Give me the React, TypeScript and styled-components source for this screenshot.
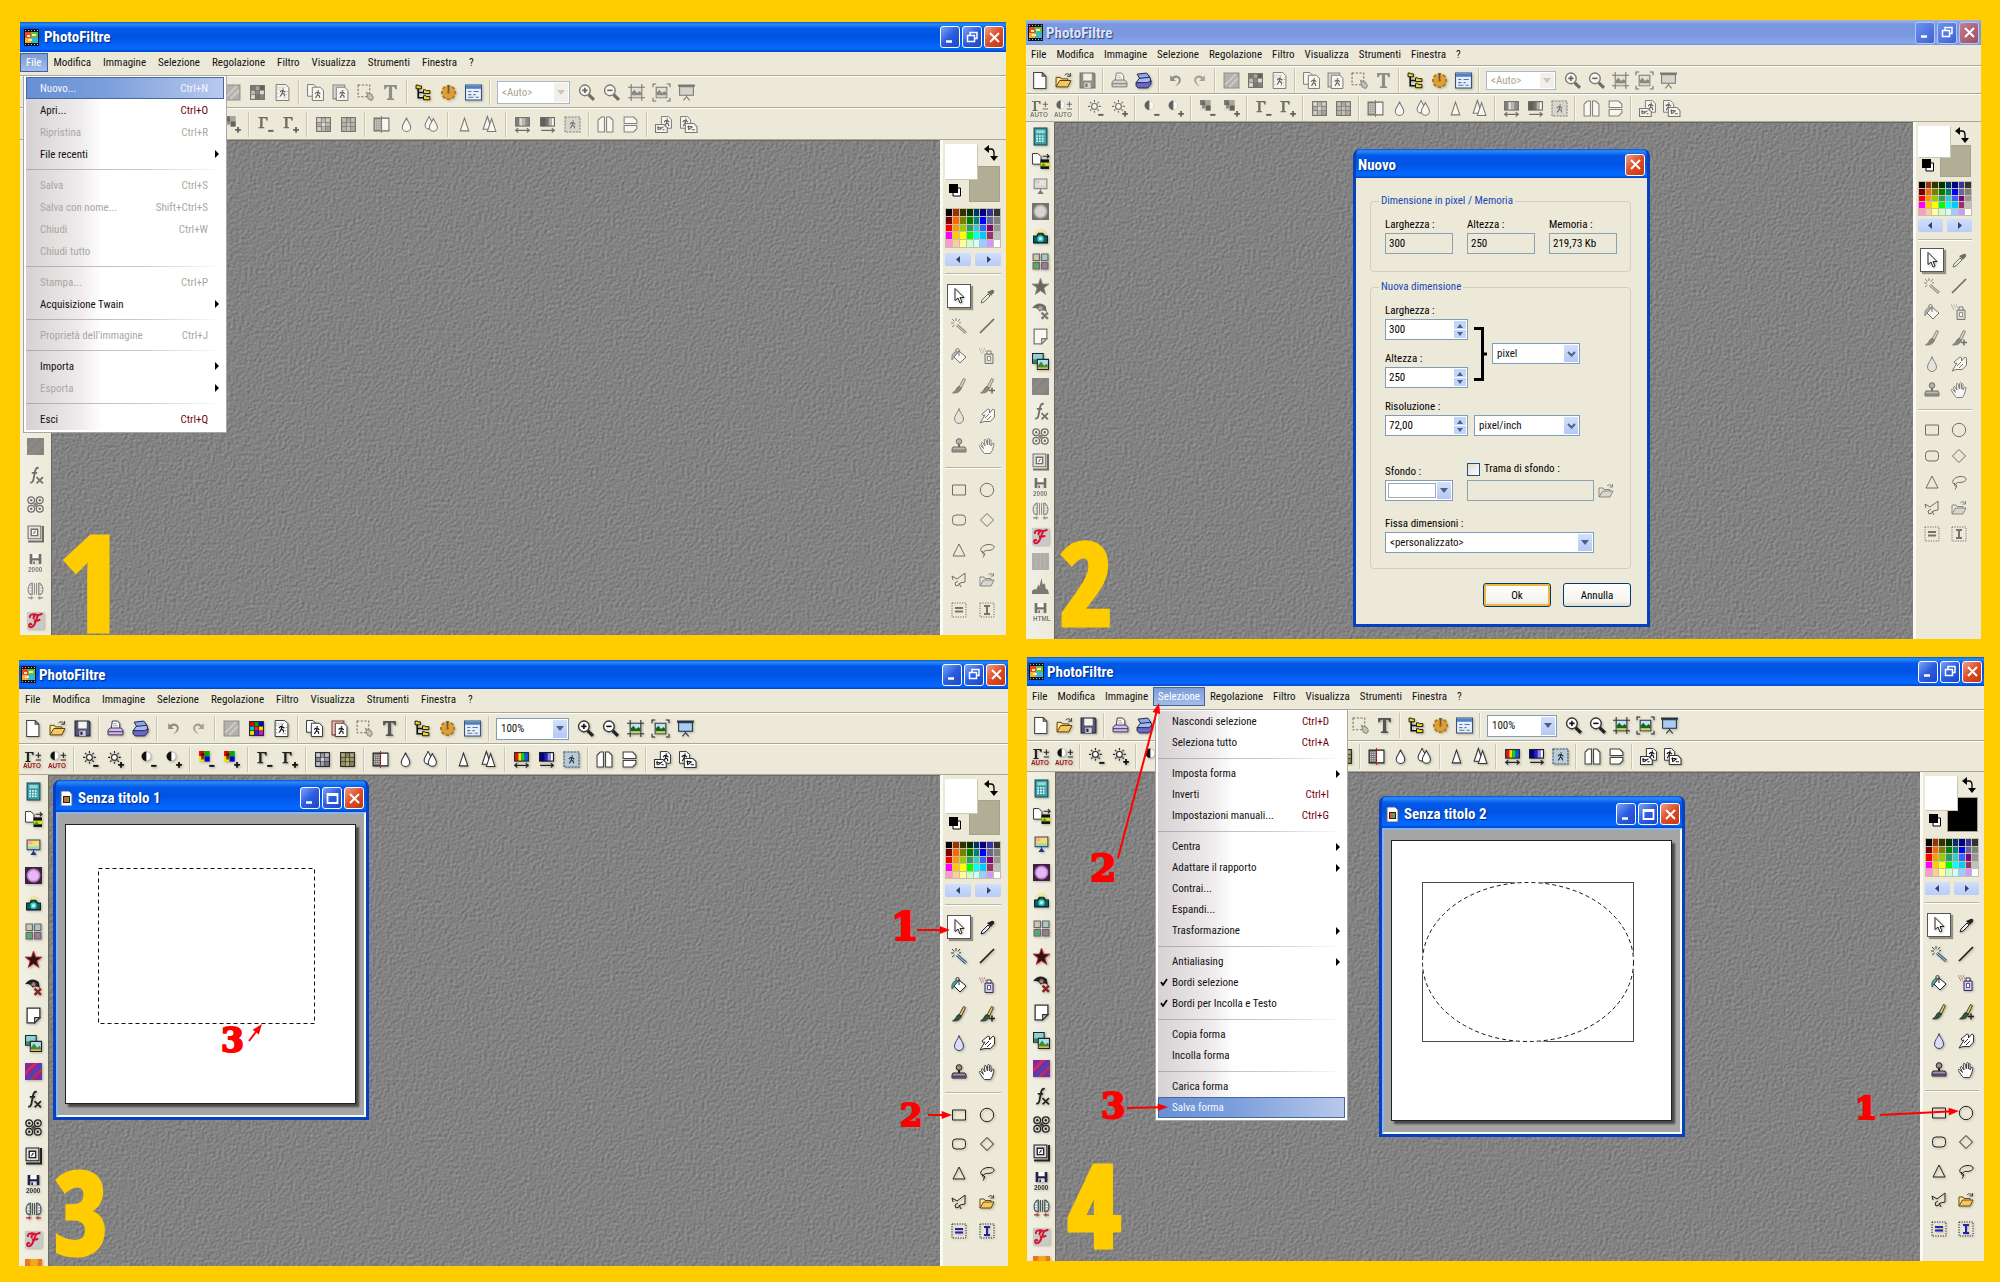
import React from 'react';
import styled, { createGlobalStyle, css } from 'styled-components';

/* ---------- shared values ---------- */

const face = '#ece9d8';
const line = '#aca899';
const yellow = '#ffcc00';
const uiFont = '"Roboto Condensed", "Liberation Sans Narrow", "Liberation Sans", sans-serif';

type Metrics = {
  title: number;
  titleGap: number;
  menu: number;
  menuPad: number;
  bar: number;
  button: number;
  leftWidth: number;
  leftPitch: number;
  rightWidth: number;
  contentWidth: number;
  swatch: number;
  palette: number;
  gap: number;
  tool: number;
};

const Global = createGlobalStyle`
  *, *::before, *::after { box-sizing: border-box; }
  body { margin: 0; background: ${yellow}; font-family: ${uiFont}; }
  button, input, select { font: inherit; color: inherit; }
`;

const Page = styled.main`
  display: grid;
  grid-template-columns: 988fr 958fr;
  grid-template-rows: 619fr 609fr;
  gap: 18px;
  padding: 20px 16px 16px 20px;
  height: 100vh;
  min-height: 900px;
  min-width: 1500px;
  background: ${yellow};
`;

/* ---------- application frame ---------- */

const Frame = styled.section<{ $inset: string }>`
  position: relative;
  display: flex;
  flex-direction: column;
  min-height: 0;
  min-width: 0;
  margin: ${p => p.$inset};
  overflow: hidden;
  background: ${face};
  font-size: 11px;
`;

const TitleBar = styled.header<{ $h: number; $gap?: number; $inactive?: boolean; $top?: number }>`
  display: flex;
  flex: none;
  align-items: center;
  gap: ${p => p.$gap ?? 5}px;
  height: ${p => p.$h}px;
  padding: ${p => p.$top ?? 0}px 2px 0 ${p => (p.$gap ?? 5) - 1}px;
  color: ${p => (p.$inactive ? '#d8e4f8' : '#fff')};
  background: ${p =>
    p.$inactive
      ? 'linear-gradient(#9db4ec 0%, #7a97df 18%, #7a97e0 60%, #86a8ec 90%, #7a93d8 100%)'
      : 'linear-gradient(#0a56d8 0%, #2a8cf8 7%, #0458e8 22%, #0054e4 50%, #0464fa 80%, #0468ff 90%, #0444c0 100%)'};
`;

const TitleText = styled.h2`
  flex: 1;
  margin: 0;
  font-size: 15px;
  font-weight: 700;
  text-shadow: 1px 1px 1px rgba(0, 20, 90, 0.7);
`;

const WindowButtons = styled.div`
  display: flex;
  gap: 2px;
`;

const WinButton = styled.button<{ $close?: boolean; $dim?: boolean }>`
  display: grid;
  place-items: center;
  width: 20px;
  height: 22px;
  padding: 0;
  border: 1px solid ${p => (p.$dim ? '#b4c6f0' : '#fff')};
  border-radius: 3px;
  background: ${p =>
    p.$close
      ? p.$dim
        ? 'linear-gradient(135deg, #c08090, #a04c60)'
        : 'linear-gradient(135deg, #f0a088, #dc4c28 50%, #c03810)'
      : p.$dim
        ? 'linear-gradient(135deg, #6c92ee, #3c62d4)'
        : 'linear-gradient(135deg, #7ca4f8, #2c5ce0 50%, #1c48c8)'};
`;

const MenuBar = styled.nav<{ $h: number }>`
  display: flex;
  flex: none;
  align-items: center;
  height: ${p => p.$h}px;
  padding: 0 0 2px;
  border-bottom: 1px solid ${line};
`;

const MenuBarItem = styled.button<{ $active?: boolean; $pad: number }>`
  height: 19px;
  padding: 0 ${p => p.$pad}px;
  border: 1px solid ${p => (p.$active ? '#3d62a8' : 'transparent')};
  background: ${p => (p.$active ? 'linear-gradient(#7c9cd8, #a4bce8)' : 'transparent')};
  color: ${p => (p.$active ? '#fff' : '#111')};
  white-space: nowrap;
`;

const ToolBar = styled.div<{ $h: number }>`
  display: flex;
  flex: none;
  align-items: center;
  height: ${p => p.$h}px;
  padding-left: 1px;
  border-top: 1px solid #fff;
  border-bottom: 1px solid ${line};
`;

const IconButton = styled.button<{ $w: number; $h?: number }>`
  display: grid;
  flex: none;
  place-items: center;
  width: ${p => p.$w}px;
  height: ${p => p.$h ?? 24}px;
  padding: 0;
  border: 0;
  background: transparent;
`;

const Glyph = styled.svg<{ $off?: boolean; $size?: number }>`
  display: block;
  width: ${p => p.$size ?? 17}px;
  height: ${p => p.$size ?? 17}px;
  overflow: visible;
  ${p =>
    p.$off
      ? css`filter: grayscale(1); opacity: 0.62;`
      : css`filter: drop-shadow(1px 1px 1px rgba(60, 60, 40, 0.35));`}
`;

const Divider = styled.span`
  flex: none;
  width: 2px;
  height: 25px;
  margin: 0 3px;
  border-left: 1px solid #c9c6b4;
  border-right: 1px solid #f8f6ec;
`;

const ZoomField = styled.span`
  display: flex;
  margin: 0 4px 0 3px;
`;

const SelectBox = styled.span<{ $w: number; $h: number; $off?: boolean }>`
  position: relative;
  display: inline-flex;
  flex: none;
  width: ${p => p.$w}px;
  height: ${p => p.$h}px;
  border: 1px solid ${p => (p.$off ? '#a8b8cc' : '#7f9db9')};
  background: #fff;

  select {
    flex: 1;
    width: 100%;
    padding: 0 16px 0 4px;
    border: 0;
    background: transparent;
    color: ${p => (p.$off ? '#a8a594' : '#111')};
    opacity: 1;
    appearance: none;
    outline: 0;
  }
`;

const Caret = styled.span<{ $off?: boolean }>`
  position: absolute;
  top: 1px;
  right: 1px;
  bottom: 1px;
  display: grid;
  place-items: center;
  width: 14px;
  background: ${p => (p.$off ? '#f1efe6' : 'linear-gradient(#d4e0fc, #b4c8f4)')};
  color: ${p => (p.$off ? '#c9c7ba' : '#4d6185')};
  pointer-events: none;
`;

const Body = styled.div`
  display: flex;
  flex: 1;
  min-height: 0;
`;

const LeftBar = styled.div<{ $w: number }>`
  display: flex;
  flex: none;
  flex-direction: column;
  align-items: center;
  width: ${p => p.$w}px;
  padding-top: 2px;
  overflow: hidden;
  background: linear-gradient(90deg, #f2f0e6, ${face});
`;

const Desk = styled.div`
  flex: 1;
  min-width: 0;
  overflow: hidden;
  border-top: 1px solid #6c6a60;
  border-left: 1px solid #6c6a60;
  background: #818181;
`;

const Grain = styled.svg`
  display: block;
  width: 100%;
  height: 100%;
`;

/* ---------- right tool panel ---------- */

const RightBar = styled.aside<{ $w: number; $content: number }>`
  flex: none;
  width: ${p => p.$w}px;
  padding: 4px ${p => p.$w - p.$content - 5}px 0 2px;
  border-left: 3px solid #faf9f2;
`;

const Swatches = styled.div<{ $h: number }>`
  position: relative;
  height: ${p => p.$h}px;
`;

const Swatch = styled.span<{ $back?: boolean; $color: string }>`
  position: absolute;
  ${p => (p.$back ? 'right: 1px; bottom: 0;' : 'left: 0; top: 0; z-index: 1;')}
  width: ${p => (p.$back ? 31 : 33)}px;
  height: 62%;
  border: 1px solid;
  border-color: ${p => (p.$back ? '#a5a288' : '#fff #c9c6b4 #c9c6b4 #fff')};
  background: ${p => p.$color};
`;

const Corner = styled.span<{ $end?: boolean }>`
  position: absolute;
  ${p => (p.$end ? 'right: 3px; top: 1px;' : 'left: 4px; bottom: 2px;')}
`;

const Palette = styled.div<{ $h: number; $gap: number }>`
  display: grid;
  grid-template-columns: repeat(8, 1fr);
  gap: 1px;
  height: ${p => p.$h}px;
  margin-top: ${p => p.$gap}px;
  padding: 1px;
  background: #c4c0ac;
`;

const Cell = styled.span<{ $color: string }>`
  background: ${p => p.$color};
`;

const Pager = styled.div<{ $gap: number }>`
  display: grid;
  grid-template-columns: 1fr 1fr;
  gap: 4px;
  margin: ${p => p.$gap}px 0 7px;
`;

const PagerButton = styled.button`
  display: grid;
  place-items: center;
  height: 13px;
  padding: 0;
  border: 0;
  border-radius: 2px;
  background: linear-gradient(#d0defc, #b8ccf8);
`;

const Rule = styled.hr`
  height: 2px;
  margin: 0;
  border: 0;
  border-top: 1px solid #b9b6a4;
  border-bottom: 1px solid #fff;
`;

const ToolGrid = styled.div<{ $row: number }>`
  display: grid;
  grid-template-columns: 1fr 1fr;
  grid-auto-rows: ${p => p.$row}px;
  place-items: center;
  padding: 6px 0;
`;

const ToolButton = styled.button<{ $on?: boolean }>`
  display: grid;
  place-items: center;
  width: 24px;
  height: 24px;
  padding: 0;
  border: 1px solid ${p => (p.$on ? '#555' : 'transparent')};
  background: ${p => (p.$on ? '#fff' : 'transparent')};
  box-shadow: ${p => (p.$on ? '2px 2px 1px rgba(90, 88, 70, 0.6)' : 'none')};
`;

/* ---------- drop-down menu ---------- */

const Menu = styled.ul<{ $x: number; $y: number; $w: number }>`
  position: absolute;
  z-index: 2;
  left: ${p => p.$x}px;
  top: ${p => p.$y}px;
  width: ${p => p.$w}px;
  margin: 0;
  padding: 1px 2px 2px;
  border: 1px solid #a8a8a0;
  background: #fff;
  list-style: none;
`;

const MenuEntry = styled.li<{ $h: number }>`
  height: ${p => p.$h}px;
  background: linear-gradient(90deg, #d6d1d3, #f0ecee 55px, #fff 76px);
`;

const MenuRow = styled.button<{ $hot?: boolean }>`
  display: grid;
  grid-template-columns: 12px 1fr auto 14px;
  align-items: center;
  width: 100%;
  height: 100%;
  padding: 0 1px;
  border: 1px solid ${p => (p.$hot ? '#44699f' : 'transparent')};
  background: ${p => (p.$hot ? 'linear-gradient(90deg, #6890d4, #7c9edb 40%, #b8c9ec)' : 'transparent')};
  color: ${p => (p.$hot ? '#f4f8ff' : '#111')};
  text-align: left;

  &:disabled { color: #a9a89e; }
`;

const Shortcut = styled.span<{ $plain?: boolean }>`
  color: ${p => (p.$plain ? 'inherit' : '#700010')};
`;

const MenuArrow = styled.span`
  display: grid;
  justify-content: end;
  padding-right: 2px;
`;

const MenuRule = styled.li<{ $h: number }>`
  display: flex;
  align-items: center;
  height: ${p => p.$h}px;
  background: linear-gradient(90deg, #d6d1d3, #f0ecee 55px, #fff 76px);

  &::after {
    content: '';
    flex: 1;
    height: 1px;
    background: linear-gradient(90deg, #aaa, #ccc 60%, #fff);
  }
`;

/* ---------- inner windows ---------- */

const InnerWindow = styled.section<{ $x: number; $y: number; $w: number; $h: number }>`
  position: absolute;
  z-index: 1;
  left: ${p => p.$x}px;
  top: ${p => p.$y}px;
  display: flex;
  flex-direction: column;
  width: ${p => p.$w}px;
  height: ${p => p.$h}px;
  overflow: hidden;
  border: 3px solid #0840c0;
  border-top: 0;
  border-radius: 7px 7px 0 0;
  background: #0840c0;
`;

const Mat = styled.div`
  flex: 1;
  padding: 10px 8px 11px 7px;
  border: 2px solid #c8dcf8;
  border-color: #88b4f0 #f4fcff #f4fcff #88b4f0;
  background: #a5a5a5;
`;

const Canvas = styled.svg`
  display: block;
  width: 100%;
  height: 100%;
  border: 1px solid #222;
  background: #fff;
  box-shadow: 3px 3px 2px #484848;
`;

/* ---------- dialog ---------- */

const DialogBody = styled.form`
  display: flex;
  flex: 1;
  flex-direction: column;
  padding: 16px 16px 0 14px;
  background: ${face};
`;

const Group = styled.fieldset<{ $last?: boolean }>`
  margin: 0 0 ${p => (p.$last ? 14 : 8)}px;
  padding: 8px 13px ${p => (p.$last ? 15 : 17)}px 14px;
  border: 1px solid #d0d0bf;
  border-radius: 4px;

  legend {
    height: 14px;
    margin-left: -6px;
    padding: 0 2px;
    line-height: 14px;
    color: #1848b4;
  }
`;

const Line = styled.div<{ $gap: number; $top?: number; $align?: string }>`
  display: flex;
  align-items: ${p => p.$align ?? 'flex-end'};
  gap: ${p => p.$gap}px;
  margin-top: ${p => p.$top ?? 0}px;
`;

const Stack = styled.div<{ $gap: number }>`
  display: flex;
  flex-direction: column;
  gap: ${p => p.$gap}px;
`;

const Label = styled.label`
  display: block;
  height: 17px;
  line-height: 18px;
`;

const TextField = styled.input<{ $w: number }>`
  display: block;
  width: ${p => p.$w}px;
  height: 21px;
  padding: 0 3px;
  border: 1px solid #8aa2b6;
  background: transparent;
  outline: 0;
`;

const Spinner = styled.span`
  display: flex;
  width: 83px;
  height: 21px;
  border: 1px solid #7f9db9;
  background: #fff;

  input {
    flex: 1;
    min-width: 0;
    padding: 0 3px;
    border: 0;
    background: transparent;
    outline: 0;
  }
`;

const SpinButtons = styled.span`
  display: grid;
  width: 12px;
  margin: 1px;
  gap: 1px;
`;

const SpinButton = styled.button`
  display: grid;
  place-items: center;
  padding: 0;
  border: 0;
  background: #c4d4fa;
  color: #4d6185;
`;

const ColorBox = styled.button`
  display: flex;
  position: relative;
  width: 68px;
  height: 21px;
  padding: 2px;
  border: 1px solid #7f9db9;
  background: #fff;

  &::before {
    content: '';
    width: 48px;
    height: 15px;
    border: 1px solid #aaa;
  }
`;

const CheckLabel = styled.label`
  display: flex;
  align-items: center;
  gap: 4px;
  height: 18px;
  margin-bottom: 2px;
  line-height: 14px;

  input {
    width: 13px;
    height: 13px;
    margin: 0;
    border: 1px solid #1c5180;
    background: linear-gradient(135deg, #dcdcd4, #fff);
    appearance: none;
  }
`;

const PushButton = styled.button<{ $default?: boolean }>`
  width: 68px;
  height: 24px;
  padding: 0;
  border: 1px solid #003c74;
  border-radius: 3px;
  background: linear-gradient(#fff, #f4f3ee 80%, #dcd8cc);
  box-shadow: ${p => (p.$default ? 'inset 0 0 0 2px #f0b83c' : 'none')};
`;

const DialogButtons = styled.div`
  display: flex;
  justify-content: flex-end;
  gap: 12px;
`;

/* ---------- annotations ---------- */

const Overlay = styled.svg`
  position: absolute;
  z-index: 3;
  inset: 0;
  width: 100%;
  height: 100%;
  pointer-events: none;
`;

const StepNumber = styled.text<{ $size: number }>`
  font-family: "Open Sans Condensed", ${uiFont};
  font-size: ${p => p.$size}px;
  font-weight: 700;
  fill: ${yellow};
  stroke: ${yellow};
  stroke-width: 5;
`;

const RedNumber = styled.text<{ $size: number }>`
  font-family: "DejaVu Serif", serif;
  font-size: ${p => p.$size}px;
  font-weight: 700;
  fill: #f00;
  stroke: #f00;
  stroke-width: 2;
`;

/* ---------- icon drawings, all on a 16 by 16 grid ---------- */

const k = { fill: 'none', stroke: '#222', strokeWidth: 1 };
const man = (x: number, y: number, c = '#111') => (
  <g transform={`translate(${x} ${y})`} fill="none" stroke={c} strokeWidth="1.1">
    <circle cx="3.6" cy="0.8" r="0.7" fill={c} stroke="none" />
    <path d="M3.4 1.8 2.8 4.6 1 7.6M2.8 4.4 4.6 5.6 5 7.6M0.6 3.6 2 2.3 3.6 2.2 5.6 3.8" />
  </g>
);
const sheet = (x: number, y: number, w: number, h: number) => (
  <path d={`M${x} ${y}h${w - 3}l3 3v${h - 3}h${-w}z`} fill="#fff" stroke="#333" strokeWidth=".9" />
);
const minus = <path d="M10.5 14h5" stroke="#111" strokeWidth="1.8" />;
const plus = <path d="M10.5 13h5.4M13.2 10.3v5.4" stroke="#111" strokeWidth="1.7" />;
const sun = (
  <g fill="none" stroke="#222">
    <circle cx="7" cy="6" r="2.7" fill="#fff" />
    <path d="M7 0v2M7 10v2M1 6h2M11 6h2M2.8 1.8l1.4 1.4M9.8 8.8l1.4 1.4M2.8 10.2l1.4-1.4M9.8 3.2l1.4-1.4" />
  </g>
);
const half = (
  <g>
    <circle cx="6" cy="5" r="4.2" fill="#fff" stroke="#bbb" strokeWidth=".7" />
    <path d="M6 .5a4.5 4.5 0 0 0 0 9z" fill="#111" />
  </g>
);
const rgb = (
  <g>
    <path d="M1 0h5v5H1z" fill="#e00" />
    <path d="M6 0h5v5H6z" fill="#0a0" />
    <path d="M6 5h5v5H6z" fill="#00c" />
    <path d="M1 5h5v5H1z" fill="#fd0" />
    <path d="M3 2h3v6H3z" fill="#111" opacity=".7" />
  </g>
);
const gamma = (
  <path d="M1 1h9v3.5h-1C8.600 2.400 8 2 6.500 2H5.200v8.300l1.600.4v.8H1.400v-.8l1.600-.4V2L1 1.700z" fill="#222" />
);
const auto = <text x="-1" y="16" fontSize="6" fontWeight="700" fontFamily="Liberation Sans, sans-serif" fill="#a02020">AUTO</text>;
const nine = (cs: string[]) => (
  <g>
    <path d="M1 1h14v14H1z" fill="#222" />
    {cs.map((c, i) => <path key={i} d={`M${2 + (i % 3) * 4.2} ${2 + Math.floor(i / 3) * 4.2}h3.600v3.600h-3.600z`} fill={c} />)}
  </g>
);
const drop = (x: number, y: number, s: number) => (
  <path transform={`translate(${x} ${y}) scale(${s})`} d="M5 0C4.500 3 1 6 1 9a4 4 0 0 0 8 0C9 6 5.500 3 5 0z" fill="#fff" stroke="#333" />
);
const cone = (x: number, y: number) => (
  <path transform={`translate(${x} ${y})`} d="M5 0 1 12h8z" fill="#fff" stroke="#333" />
);
const picture = (
  <g>
    <path d="M3 3h10v10H3z" fill="#c4e0f4" stroke="#333" />
    <path d="M3.500 8 6 5.500l2.500 3L11 6.500l1.700 2v4H3.500z" fill="#162" />
    <path d="M3.500 10.500h9v2h-9z" fill="#dc6" />
  </g>
);
const lens = (sign: string) => (
  <g>
    <path d="m10 10 5 5" stroke="#222" strokeWidth="3" />
    <circle cx="6.500" cy="6" r="5" fill="#fff" stroke="#333" strokeWidth="1.300" />
    <path d={sign} stroke="#111" strokeWidth="1.500" />
  </g>
);
const folder = (
  <g stroke="#5b3a08" strokeWidth=".9">
    <path d="M1 14V5h4l1 1.500h6V8" fill="#ffe89a" />
    <path d="m1 14 3.500-6H15l-3 6z" fill="#f4c860" />
    <path d="M9 3c2-2 4-1.500 5 .500M14.500 1v3h-3" fill="none" stroke="#333" />
  </g>
);
const floppy = (w: string) => (
  <g>
    <path d="M2.500 0h11v9.500h-11z" fill="#224" />
    <path d="M5 0h6v4H5z" fill="#fff" />
    <path d="M5 6h6v3.500H5z" fill="#dde" />
    <path d="M6 7h1.500v2.500H6z" fill="#224" />
    <text x="1" y="16.500" fontSize="6" fontWeight="700" fontFamily="Liberation Sans, sans-serif" fill="#333">{w}</text>
  </g>
);
const brush = (
  <g>
    <path d="m8 9 4.500-8.500 2 1L10.500 10z" fill="#e8c860" stroke="#222" strokeWidth=".8" />
    <path d="M8 8.500C5 9 6 12 1.500 15c5 .5 8-1.500 9-5z" fill="#354" stroke="#111" strokeWidth=".6" />
  </g>
);
const marquee = <path d="M1 1h14v14H1z" fill="none" stroke="#222" strokeDasharray="1.200 1.300" />;
const ring = (x: number, y: number) => (
  <g>
    <circle cx={x} cy={y} r="3.200" {...k} strokeWidth="1.200" />
    <circle cx={x} cy={y} r="1.100" fill="#222" />
  </g>
);

const icons: Record<string, React.ReactNode> = {
  new: <path d="M2.500 .5h8l3.500 3.500v11.500H2.500zM10.500 .5V4H14" fill="#fff" stroke="#444" />,
  open: folder,
  save: <g><path d="M1 1h13l1 1v13H1z" fill="#557" stroke="#223" /><path d="M4 1.500h8V8H4z" fill="#f4f4e8" /><path d="M5 10h6v5H5z" fill="#ccd" /><path d="M6 11h2v3H6z" fill="#223" /></g>,
  print: <g stroke="#335" strokeWidth=".9"><path d="M4 8 5 1h5l2 2.500V8z" fill="#fff" /><path d="M1 9.500 3 7.500h10l2 2V14H1z" fill="#d8b8e8" /><path d="M1 11h14" /><path d="M6 3.500h3M6 5.500h4" stroke="#999" /></g>,
  scan: <g stroke="#224" strokeWidth=".9"><path d="M2 2 11 1l3 4-9 2z" fill="#88a8f0" /><path d="m1 10 3-4 10-1 1 4-3 3z" fill="#a8b8f4" /><path d="M1 10h11l3-2v3.500L12 15H3l-2-2z" fill="#6c68c8" /></g>,
  undo: <path d="M3 3v5.500h5.500L6.300 6.500C9 4 12 6 11 9c-.5 1.500-1.500 3-3.500 4.500C12 12 14.500 8 12 4.800 10 2.500 6.500 2.800 4.800 4.800z" fill="#555" />,
  redo: <path d="M13 3v5.500H7.500l2.200-2C7 4 4 6 5 9c.5 1.500 1.500 3 3.500 4.500C4 12 1.500 8 4 4.800 6 2.500 9.500 2.800 11.200 4.800z" fill="#777" />,
  shade: <g><path d="M1 1h14v14H1z" fill="#909090" stroke="#555" /><path d="M2 12 12 2M6 14 14 6" stroke="#b4b4b4" strokeWidth="2" /></g>,
  colors: nine(['#e00', '#0a0', '#00d', '#0cc', '#e22', '#fd0', '#fd0', '#22e', '#e0e']),
  noise: <g>{sheet(2, 0.5, 12, 15)}<path d="M3 3h7M3 5h3M10 7h3M3 9h2M11 10h2M3 12h4M9 13h4" stroke="#888" strokeDasharray="1 1" />{man(5, 4)}</g>,
  copies: <g>{sheet(0.5, 0.5, 9, 11)}{sheet(5, 3, 10.5, 12.5)}{man(7, 5.5)}</g>,
  paste: <g><path d="M1 1h11v13H1z" fill="#e8c8b8" stroke="#933" />{sheet(4, 3, 11, 12.5)}{man(6.5, 5.5)}</g>,
  select: <g><path d="M1 1h11v11H1z" fill="none" stroke="#222" strokeDasharray="2 1.500" /><path d="m9 8 2 1 3 1 1.500 3-2 2.500-3-1.500z" fill="#aaa" stroke="#555" /></g>,
  text: <path d="M2 1h12v4h-1.500C12 3 11.500 2.500 9.500 2.500v10c0 1 .5 1.200 2 1.500v1h-7v-1c1.500-.3 2-.5 2-1.500v-10C4.500 2.500 4 3 3.500 5H2z" fill="#555" />,
  tree: <g stroke="#111"><path d="M3 4v9h6M3 8h6" fill="none" strokeWidth="1.500" /><path d="M1 1h2l.7.8H6V4.500H1zM8 5.500h2l.7.8H14V9H8zM8 11h2l.7.8H14v3H8z" fill="#f4d820" strokeWidth=".9" /></g>,
  gear: <g><path d="M8 1v14M1 8h14M3 3l10 10M13 3 3 13" stroke="#b87818" strokeWidth="3.400" /><circle cx="8" cy="8" r="5.400" fill="#e0a030" /><path d="M8 8V1" stroke="#654" strokeWidth="1.500" /><circle cx="8" cy="8" r="1.200" fill="#865" /></g>,
  form: <g><path d="M.5 1h15v14H.5z" fill="#e8f0ff" stroke="#357" /><path d="M1 1.500h14V4.500H1z" fill="#5080c8" /><path d="M3 7h3M8 7h5M3 10h3M8 10h2M3 12.500h5M10 12.500h3" stroke="#579" /></g>,
  zoomin: lens('M4 6h5M6.500 3.500v5'),
  zoomout: lens('M4 6h5'),
  fit: <g>{picture}<path d="M3 0v16M13 0v16M0 3h16M0 13h16" stroke="#333" strokeDasharray="3.500 9" /></g>,
  fit2: <g>{picture}<path d="M0 3V0h3M13 0h3v3M0 13v3h3M13 16h3v-3" {...k} /></g>,
  screen: <g stroke="#234"><path d="M1.500 2.500h13v8h-13z" fill="#a8ccf4" /><path d="M0 1.500h16" strokeWidth="2" /><path d="M8 10.500v2M8 12l-3 3.500M8 12l3 3.500" fill="none" /></g>,

  gammaauto: <g><g transform="scale(.9)">{gamma}</g><path d="M11 4h5M13.500 1.500v5M11 8.500h5" stroke="#222" />{auto}</g>,
  halfauto: <g><g transform="scale(.9)">{half}</g><path d="M11 4h5M13.500 1.500v5M11 8.500h5" stroke="#222" />{auto}</g>,
  sunm: <g>{sun}{minus}</g>,
  sunp: <g>{sun}{plus}</g>,
  halfm: <g>{half}{minus}</g>,
  halfp: <g>{half}{plus}</g>,
  rgbm: <g>{rgb}{minus}</g>,
  rgbp: <g>{rgb}{plus}</g>,
  gamm: <g>{gamma}{minus}</g>,
  gamp: <g>{gamma}{plus}</g>,
  grid: nine(['#ccd', '#99a', '#bbc', '#889', '#ccd', '#99a', '#bbc', '#99a', '#778']),
  grid2: nine(['#aa7', '#885', '#aa7', '#996', '#aa7', '#996', '#995', '#aa7', '#885']),
  contour: <g><path d="M1 2h7v12H1z" fill="#777" stroke="#222" /><path d="M8 2h7v12H8z" fill="#fff" stroke="#222" /><path d="M2 4h6M2 6h6M2 8h6M2 10h6M2 12h6" stroke="#ddd" strokeDasharray="1 1" /><path d="M8 0v16" stroke="#c22" strokeDasharray="2 1" /></g>,
  drop: drop(3, 1.5, 1),
  drops: <g>{drop(1, 0, 0.95)}{drop(5, 2, 0.95)}</g>,
  cone: cone(3, 2),
  cones: <g>{cone(1, 0.5)}{cone(5, 2.5)}</g>,
  rainbow: <g><path d="M1 1h14v9H1z" fill="#222" /><path d="M2 2h3v7H2z" fill="#e11" /><path d="M5 2h3v7H5z" fill="#fd0" /><path d="M8 2h3v7H8z" fill="#1c3" /><path d="M11 2h3v7h-3z" fill="#15e" /><path d="M2 13.500h12M4 11.500l-2.500 2L4 15.500M12 11.500l2.500 2-2.500 2" {...k} /></g>,
  bluefade: <g><path d="M1 1h14v9H1z" fill="#111" /><path d="M2 2h4v7H2z" fill="#008" /><path d="M6 2h3v7H6z" fill="#22c" /><path d="M9 2h3v7H9z" fill="#88f" /><path d="M12 2h2v7h-2z" fill="#fff" /><path d="M2 13.500h12M12 11.500l2.500 2-2.500 2" {...k} /></g>,
  postage: <g><path d="M1 1h14v14H1z" fill="#b8ccd8" stroke="#678" strokeWidth="1.500" strokeDasharray="2 1" />{man(5, 4, '#234')}</g>,
  fliph: <g fill="#fff" stroke="#444"><path d="M1 4l3-3h3v14H1z" /><path d="M15 4l-3-3H9v14h6z" /></g>,
  flipv: <g fill="#fff" stroke="#444"><path d="M2 1h9l3 3v3H2z" /><path d="M2 9h12v3l-3 3H2z" /></g>,
  rotl: <g>{sheet(6, 0.5, 9.5, 11)}{man(8, 2)}<path d="M.5 8h8l3 3v4.500H.5z" fill="#fff" stroke="#333" /><path d="M2 11h4M4 13l4-3M7 13h2M3 9.500v4" stroke="#111" /></g>,
  rotr: <g>{sheet(0.5, 0.5, 9.5, 11)}{man(2, 2)}<path d="M5 7h8l3 3v5.500H5z" fill="#fff" stroke="#333" /><path d="M7 10h4M8 13l4-3M11 13h3M8 9v4" stroke="#111" /></g>,

  calc: <g><path d="M2 0h12v16H2z" fill="#38a0a4" stroke="#145" /><path d="M4 2h8v3H4z" fill="#9ad8d0" /><path d="M4 7.500h8M4 10h8M4 12.500h8" stroke="#fff" strokeWidth="1.500" strokeDasharray="1.600 1" /></g>,
  film: <g>{sheet(0.5, 0.5, 8, 10)}<path d="M8 6h8v9H8z" fill="#111" /><path d="M8 9h8v3.500H8z" fill="#dd2" /><path d="m8 12.500 3-3 2 3z" fill="#3a3" /><path d="M10 3h6M14 1l2 2-2 2" {...k} /></g>,
  monitor: <g><path d="M2 1h12v9H2z" fill="#f4e070" stroke="#446" /><path d="M3 7h10v2.500H3z" fill="#8dc" /><path d="M3 2h4v3H3z" fill="#fa8" /><path d="M8 10v3" stroke="#446" /><path d="M5 15l3-4 3 4z" fill="#238" /></g>,
  glow: <g><path d="M0 0h16v16H0z" fill="#402040" /><circle cx="8" cy="8" r="6.500" fill="#b080c0" /><circle cx="8" cy="8" r="5" fill="#e8b8f4" /></g>,
  camera: <g><path d="M2 5 5 2l3-1 3 2 2 2z" fill="#f4e890" /><path d="M1.500 7.500h3L6 5h4l2 2.500h2.500V14h-13z" fill="#145c5c" stroke="#022" /><circle cx="8" cy="10" r="3" fill="#4cc" /><circle cx="8" cy="10" r="1.300" fill="#dff" /></g>,
  squares: <g stroke="#666"><path d="M1 1h6v6H1z" fill="#cdc8a8" /><path d="M9 1h6v6H9z" fill="#a8c8c8" /><path d="M1 9h6v6H1z" fill="#5ca868" /><path d="M9 9h6v6H9z" fill="#a07898" /></g>,
  star: <path d="m8 0 2 5.700h6l-4.800 3.700L13 15.500 8 12l-5 3.500 1.800-6.100L0 5.700h6z" fill="#301010" stroke="#d03030" strokeWidth=".8" />,
  eye: <g><path d="M0 5C3 0 9-1 13 3l1 6c-2-3-5-2-7-1-1-2-3-4-7-3z" fill="#222" /><circle cx="8" cy="5" r="2" fill="#a77" /><path d="m9 9 6 6M15 9l-6 6" stroke="#822" strokeWidth="2.200" /></g>,
  note: <g><path d="M2 1h12v9l-5 5H2z" fill="#fff" stroke="#333" strokeWidth="1.200" /><path d="M14 10H9v5z" fill="#bbb" stroke="#333" /></g>,
  photos: <g><path d="M.5 .5h10v9H.5z" fill="#8cd0d8" stroke="#222" /><path d="M1 6h9v3H1z" fill="#385" /><path d="M5 6h10.500v9.500H5z" fill="#a8e0f0" stroke="#222" /><path d="m5.500 12 3-4 3 4 2-2 1.500 2v3h-9.500z" fill="#483" /><path d="M5.500 13.500h9.500v1.500H5.500z" fill="#db5" /></g>,
  stripes: <g><path d="M0 0h16v16H0z" fill="#7c2c9c" /><path d="M0 8 8 0h4L0 12z" fill="#d02868" /><path d="M4 16 16 4v4l-8 8z" fill="#b03060" /><path d="M0 16 16 0v3L3 16z" fill="#4048c8" /></g>,
  fx: <g><path d="M11 .8C9 .2 8 2 7.500 4.500L6 12c-.5 2-1.500 3-3 2.500M4.500 5.500h5" fill="none" stroke="#222" strokeWidth="1.700" /><path d="m9 9.500 6 6M15 9.500l-6 6" stroke="#222" strokeWidth="1.600" /></g>,
  rings: <g>{ring(4, 4)}{ring(12, 4)}{ring(4, 12)}{ring(12, 12)}<path d="M6 8h4M8 6v4" stroke="#444" strokeWidth="2" /></g>,
  frame: <g><path d="M1 1h12v12H1z" fill="#ddd" stroke="#222" /><path d="M4 4h6v6H4z" fill="#fff" stroke="#222" strokeWidth="1.300" /><path d="M6 8.500 8 5.500" stroke="#222" /><path d="M15 1v14.500H1" {...k} strokeWidth="2" /></g>,
  floppy: floppy('2000'),
  html: floppy('HTML'),
  mirror: <g><path d="M5 0C3 0 1 3 1 6s1.500 5 4 5zM11 0c2 0 4 3 4 6s-1.500 5-4 5z" fill="#a8b4b4" stroke="#455" /><path d="M2 3.500h2M2 6h2M2 8.500h2M12 3.500h2M12 6h2M12 8.500h2" stroke="#fff" /><path d="M7 0v11M9 0v11" stroke="#455" /><path d="M1 14h5M4 12.500v3M15 14h-5M12 12.500v3" stroke="#a33" /></g>,
  script: <g><path d="M0 0h16v16H0z" fill="#c9c9c9" /><path d="M3 5.500c-1.500-3 3-4 6-3 2 .500 4 0 5.500-1M11 2.500C8 6 8.500 12 5 14c-2.500 1-4-1-2.500-2.500 1-.8 2 0 1.500 1M6.500 8c2 .5 4 .2 6-.8M8.500 3C6 3.500 5.500 6 7 6.500" fill="none" stroke="#d8102c" strokeWidth="1.800" /></g>,
  sunset: <g><path d="M0 0h16v16H0z" fill="#e87818" /><path d="M5 0h7v16H5z" fill="#f4a820" /></g>,
  columns: <g><path d="M0 0h16v16H0z" fill="#888" /><path d="M4 0v16M8 0v16M12 0v16" stroke="#999" /></g>,
  peaks: <path d="M0 15V12l3-2 1 1 2-5 1 2 2-8 1 6 2-1 1 5 2 1 1 4z" fill="#333" />,

  arrow: <path d="M4 .5v12l3-2.500 2 5 2-1-2-4.500h4z" fill="#fff" stroke="#222" />,
  dropper: <g><path d="m2 15 1-3 6-6 2 2-6 6z" fill="#e8e8f8" stroke="#222" /><path d="m8 4 4 4 1-1.500c4-2 2-6.500-1.500-4z" fill="#222" /></g>,
  wand: <g><path d="m6 7 9 8" stroke="#357" strokeWidth="3" /><path d="m6 7 9 8" stroke="#cde" /><path d="M5 0v3M0 5h3M1 1l2.500 2.500M9 1 7 3.500M1 9l2.500-2M8 5l2-.5" stroke="#444" /></g>,
  line: <path d="M1 15 15 1" stroke="#222" strokeWidth="1.700" />,
  bucket: <g><path d="M8 3 15 9l-6 6-6-6z" fill="#fff" stroke="#222" /><path d="M8 8V2c0-2-3-2-3 0v4" {...k} /><path d="M7 4C3 3 0 6 1 12l2-3z" fill="#4aa8a0" stroke="#244" strokeWidth=".7" /></g>,
  spray: <g><path d="M6 6h8v9.500H6z" fill="#d8c8f0" stroke="#335" /><path d="M8 3h4v3H8z" fill="#fff" stroke="#335" /><path d="M8.500 8.500h3v4h-3z" fill="#fff" stroke="#335" strokeWidth=".8" /><path d="M0 1h7M1 3h6M2 5h3" stroke="#a44" strokeDasharray="1 1.500" /></g>,
  brush,
  brushp: <g>{brush}<path d="M10 12.500h6M13 9.500v6" stroke="#222" strokeWidth="1.500" /></g>,
  water: <path d="M8 .5C7.500 4 3.500 7 3.500 11a4.500 4.500 0 0 0 9 0C12.500 7 8.500 4 8 .5z" fill="#dcdcf8" stroke="#446" />,
  finger: <path d="m1 15 5-8-2 .5L3 6l6-5 1.500.8V5L14 1l1.500 1v7l-4 4.500H7l-2 0zM6 10l4-4M8 12l4-4" fill="#fff" stroke="#333" />,
  stamp: <g><circle cx="8" cy="3.500" r="2.800" fill="#a88" stroke="#222" /><path d="M7 6h2v3H7z" fill="#222" /><path d="M2 9h12l1 2v3H1v-3z" fill="#b09090" stroke="#222" /><path d="M1 12.500h14" stroke="#448" strokeWidth="2" /></g>,
  hand: <g fill="#fff" stroke="#444"><path d="M4.500 10.500 1.500 7.500c-1-.8-1.500.5-1 1.200L4 14l1.500 1.500h6L13.500 12 15 6c0-1.200-1.500-1-1.800 0L12 8V2.500c0-1.200-1.500-1.200-1.600 0V7 1.500c0-1.300-1.700-1.300-1.800 0L8.400 7 7 2c-.4-1.200-2-.8-1.700.5L6 8 4 5c-.7-1-2-.3-1.500.8z" /></g>,
  rect: <path d="M1.500 3h13v10h-13z" {...k} />,
  circle: <circle cx="8" cy="8" r="6.700" {...k} />,
  round: <rect x="1.500" y="3" width="13" height="10" rx="3.500" {...k} />,
  diamond: <path d="m8 1.500 6.500 6.500L8 14.500 1.500 8z" {...k} />,
  triangle: <path d="M8 2 2 14h12z" {...k} />,
  lasso: <path d="M4 11C-1 8 3 3 9 2.500c7-.5 8 4 3 5.500-3 1-5-.5-7 1.500s-1 3 0 3M3 9l3 3-2 3.500" {...k} />,
  poly: <path d="M2 8 1 4l5 3 8-6v9l-5 1-1 2-3 1-1-3 3-2M8 11l2 4" {...k} />,
  textfull: <g>{marquee}<path d="M4 6h8M4 9.500h8" stroke="#22a" strokeWidth="2" /></g>,
  textcur: <g>{marquee}<path d="M5 4h6M5 12h6M8 4v8" stroke="#22a" strokeWidth="2" /></g>,
};

const Icon = ({ name, off, size }: { name: string; off?: boolean; size?: number }) => (
  <Glyph viewBox="0 0 16 16" $off={off} $size={size} aria-hidden="true">{icons[name]}</Glyph>
);

const ChevronIcon = () => (
  <svg width="9" height="6" viewBox="0 0 9 6" aria-hidden="true"><path d="m1 1 3.500 3.500L8 1" fill="none" stroke="currentColor" strokeWidth="2" /></svg>
);
const TriangleIcon = ({ d = 'M0 0h8L4 5z' }: { d?: string }) => (
  <svg width="8" height="5" viewBox="0 0 8 5" aria-hidden="true"><path d={d} fill="currentColor" /></svg>
);
const PointerIcon = () => (
  <svg width="5" height="8" viewBox="0 0 5 8" aria-hidden="true"><path d="M0 0v8l4-4z" fill="#000" /></svg>
);
const CheckIcon = () => (
  <svg width="8" height="8" viewBox="0 0 8 8" aria-hidden="true"><path d="m1 4 2 3 4-6" fill="none" stroke="#000" strokeWidth="1.700" /></svg>
);
const AppIcon = () => (
  <svg width="15" height="17" viewBox="0 0 15 17" aria-hidden="true">
    <path d="M0 0h15v17H0z" fill="#111" />
    <path d="M1 3h6v6H1z" fill="#e84828" /><path d="M7 3h7v6H7z" fill="#58c048" />
    <path d="M1 9h6v5H1z" fill="#f0b038" /><path d="M7 9h7v5H7z" fill="#38b8d8" />
    <path d="M3 6h3v2H3zM8 5h4v2H8zM4 10h4v2H4z" fill="#f8f0a0" />
    <path d="M1 1.500h13M1 15.500h13" stroke="#bbb" strokeDasharray="1 2" />
  </svg>
);
const DocIcon = () => (
  <svg width="13" height="15" viewBox="0 0 13 15" aria-hidden="true">
    <path d="M1 0h8l3 3v12H1z" fill="#fff" stroke="#666" />
    <path d="M3 5h7v7H3z" fill="#222" /><path d="M4 6h3v5H4z" fill="#e52" /><path d="M7 6h2v5H7z" fill="#3b5" />
  </svg>
);

const winMarks: Record<string, React.ReactNode> = {
  min: <path d="M2 10.500h6" stroke="#fff" strokeWidth="2.500" />,
  restore: <path d="M4 4V1.500h7v6H9M1.500 4.500h7v6h-7z" fill="none" stroke="#fff" strokeWidth="1.500" />,
  max: <path d="M1.500 2h10v9h-10zM1 3h11" fill="none" stroke="#fff" strokeWidth="1.800" />,
  close: <path d="m2 2 9 9M11 2l-9 9" stroke="#fff" strokeWidth="2" />,
};

const WindowControl = ({ kind, label, dim }: { kind: string; label: string; dim?: boolean }) => (
  <WinButton type="button" aria-label={label} $close={kind === 'close'} $dim={dim}>
    <svg width="13" height="13" viewBox="0 0 13 13" aria-hidden="true">{winMarks[kind]}</svg>
  </WinButton>
);

/* ---------- toolbar content ---------- */

const menus = ['File', 'Modifica', 'Immagine', 'Selezione', 'Regolazione', 'Filtro', 'Visualizza', 'Strumenti', 'Finestra', '?'];

const mainTools = [
  ['new', 'open', 'save'], ['print', 'scan'], ['undo', 'redo'], ['shade', 'colors', 'noise'],
  ['copies', 'paste', 'select', 'text'], ['tree', 'gear', 'form'],
];
const viewTools = ['zoomin', 'zoomout', 'fit', 'fit2', 'screen'];
const adjustTools = [
  ['gammaauto', 'halfauto'], ['sunm', 'sunp'], ['halfm', 'halfp'], ['rgbm', 'rgbp'], ['gamm', 'gamp'],
  ['grid', 'grid2'], ['contour', 'drop', 'drops'], ['cone', 'cones'], ['rainbow', 'bluefade', 'postage'],
  ['fliph', 'flipv'], ['rotl', 'rotr'],
];
const plugins = [
  'calc', 'film', 'monitor', 'glow', 'camera', 'squares', 'star', 'eye', 'note', 'photos', 'stripes',
  'fx', 'rings', 'frame', 'floppy', 'mirror', 'script',
];
const paintTools = ['arrow', 'dropper', 'wand', 'line', 'bucket', 'spray', 'brush', 'brushp', 'water', 'finger', 'stamp', 'hand'];
const shapeTools = ['rect', 'circle', 'round', 'diamond', 'triangle', 'lasso', 'poly', 'open', 'textfull', 'textcur'];
const alwaysOn = ['new', 'open', 'scan', 'tree', 'gear', 'form', 'calc', 'film', 'camera', 'squares', 'photos', 'script', 'arrow'];

const paletteColors = [
  '#000000', '#993300', '#333300', '#003300', '#003366', '#000080', '#333399', '#333333',
  '#800000', '#ff6600', '#808000', '#008000', '#008080', '#0000ff', '#666699', '#808080',
  '#ff0000', '#ff9900', '#99cc00', '#339966', '#33cccc', '#3366ff', '#800080', '#969696',
  '#ff00ff', '#ffcc00', '#ffff00', '#00ff00', '#00ffff', '#00ccff', '#993366', '#c0c0c0',
  '#ff99cc', '#ffcc99', '#ffff99', '#ccffcc', '#ccffff', '#99ccff', '#cc99ff', '#ffffff',
];

type AppProps = {
  id: string;
  m: Metrics;
  inset: string;
  active?: string;
  inactive?: boolean;
  hasImage?: boolean;
  back?: string;
  extraPlugins: string[];
  children?: React.ReactNode;
};

function PhotoFiltre({ id, m, inset, active, inactive, hasImage, back = '#b0ae94', extraPlugins, children }: AppProps) {
  const off = (name: string) =>
    hasImage ? ['undo', 'redo', 'shade', 'select'].includes(name) : !alwaysOn.includes(name);
  const group = (names: string[]) => names.map(n => (
    <IconButton type="button" key={n} aria-label={n} $w={m.button}><Icon name={n} off={off(n)} /></IconButton>
  ));
  return (
    <Frame $inset={inset}>
      <TitleBar $h={m.title} $gap={m.titleGap} $inactive={inactive}>
        <AppIcon />
        <TitleText>PhotoFiltre</TitleText>
        <WindowButtons>
          <WindowControl kind="min" label="Riduci a icona" dim={inactive} />
          <WindowControl kind="restore" label="Ripristina" dim={inactive} />
          <WindowControl kind="close" label="Chiudi" dim={inactive} />
        </WindowButtons>
      </TitleBar>
      <MenuBar $h={m.menu}>
        {menus.map(t => <MenuBarItem type="button" key={t} $pad={m.menuPad} $active={t === active}>{t}</MenuBarItem>)}
      </MenuBar>
      <ToolBar $h={m.bar}>
        {mainTools.map((g, i) => <React.Fragment key={i}>{group(g)}<Divider /></React.Fragment>)}
        <ZoomField>
          <SelectBox $w={m.button * 3 - 2} $h={m.bar - 9} $off={!hasImage}>
            <select aria-label="Zoom" disabled={!hasImage}>
              <option>{hasImage ? '100%' : '<Auto>'}</option>
            </select>
            <Caret $off={!hasImage}><TriangleIcon /></Caret>
          </SelectBox>
        </ZoomField>
        {group(viewTools)}
      </ToolBar>
      <ToolBar $h={m.bar}>
        {adjustTools.map((g, i) => (
          <React.Fragment key={i}>{i > 0 && <Divider />}{group(g)}</React.Fragment>
        ))}
      </ToolBar>
      <Body>
        <LeftBar $w={m.leftWidth}>
          {[...plugins, ...extraPlugins].map(n => (
            <IconButton type="button" key={n} aria-label={n} $w={24} $h={m.leftPitch}>
              <Icon name={n} off={off(n)} />
            </IconButton>
          ))}
        </LeftBar>
        <Desk>
          <Grain aria-hidden="true">
            <filter id={`${id}-grain`} x="0" y="0" width="100%" height="100%" colorInterpolationFilters="sRGB">
              <feTurbulence type="fractalNoise" baseFrequency="0.35" numOctaves="2" seed="4" />
              <feDiffuseLighting lightingColor="#b8b8b8" surfaceScale="0.4" diffuseConstant="1">
                <feDistantLight azimuth="225" elevation="45" />
              </feDiffuseLighting>
            </filter>
            <rect width="100%" height="100%" filter={`url(#${id}-grain)`} />
          </Grain>
        </Desk>
        <RightBar $w={m.rightWidth} $content={m.contentWidth}>
          <Swatches $h={m.swatch}>
            <Swatch $color="#fff" />
            <Swatch $back $color={back} />
            <Corner $end>
              <svg width="14" height="16" viewBox="0 0 14 16" aria-hidden="true">
                <path d="M4 4h3c2 0 3 1.500 3 4v4" fill="none" stroke="#000" strokeWidth="1.300" />
                <path d="M5 0v8L0 4zM6 11h8l-4 5z" />
              </svg>
            </Corner>
            <Corner>
              <svg width="13" height="13" viewBox="0 0 13 13" aria-hidden="true">
                <path d="M4 4h7.500v8H4z" fill="#fff" stroke="#000" /><path d="M0 0h9v9H0z" />
              </svg>
            </Corner>
          </Swatches>
          <Palette $h={m.palette} $gap={m.gap}>
            {paletteColors.map(c => <Cell key={c} $color={c} />)}
          </Palette>
          <Pager $gap={m.gap - 1}>
            <PagerButton type="button" aria-label="Precedente">
              <svg width="5" height="7" viewBox="0 0 5 7"><path d="M4 0v7L0 3.500z" fill="#346" /></svg>
            </PagerButton>
            <PagerButton type="button" aria-label="Successivo">
              <svg width="5" height="7" viewBox="0 0 5 7"><path d="M1 0v7l4-3.500z" fill="#346" /></svg>
            </PagerButton>
          </Pager>
          <Rule />
          <ToolGrid $row={m.tool}>
            {paintTools.map(n => (
              <ToolButton type="button" key={n} aria-label={n} $on={n === 'arrow'}><Icon name={n} off={off(n)} size={16} /></ToolButton>
            ))}
          </ToolGrid>
          <Rule />
          <ToolGrid $row={m.tool}>
            {shapeTools.map(n => (
              <ToolButton type="button" key={n} aria-label={n}><Icon name={n} off={!hasImage} size={16} /></ToolButton>
            ))}
          </ToolGrid>
        </RightBar>
      </Body>
      {children}
    </Frame>
  );
}

/* ---------- menus ---------- */

type Entry = { t: string; s?: string; off?: boolean; sub?: boolean; hot?: boolean; check?: boolean } | null;

const fileMenu: Entry[] = [
  { t: 'Nuovo...', s: 'Ctrl+N', hot: true }, { t: 'Apri...', s: 'Ctrl+O' }, { t: 'Ripristina', s: 'Ctrl+R', off: true },
  { t: 'File recenti', sub: true }, null,
  { t: 'Salva', s: 'Ctrl+S', off: true }, { t: 'Salva con nome...', s: 'Shift+Ctrl+S', off: true },
  { t: 'Chiudi', s: 'Ctrl+W', off: true }, { t: 'Chiudi tutto', off: true }, null,
  { t: 'Stampa...', s: 'Ctrl+P', off: true }, { t: 'Acquisizione Twain', sub: true }, null,
  { t: "Proprietà dell'immagine", s: 'Ctrl+J', off: true }, null,
  { t: 'Importa', sub: true }, { t: 'Esporta', sub: true, off: true }, null,
  { t: 'Esci', s: 'Ctrl+Q' },
];

const selectionMenu: Entry[] = [
  { t: 'Nascondi selezione', s: 'Ctrl+D' }, { t: 'Seleziona tutto', s: 'Ctrl+A' }, null,
  { t: 'Imposta forma', sub: true }, { t: 'Inverti', s: 'Ctrl+I' }, { t: 'Impostazioni manuali...', s: 'Ctrl+G' }, null,
  { t: 'Centra', sub: true }, { t: 'Adattare il rapporto', sub: true }, { t: 'Contrai...' }, { t: 'Espandi...' },
  { t: 'Trasformazione', sub: true }, null,
  { t: 'Antialiasing', sub: true }, { t: 'Bordi selezione', check: true }, { t: 'Bordi per Incolla e Testo', check: true }, null,
  { t: 'Copia forma' }, { t: 'Incolla forma' }, null,
  { t: 'Carica forma' }, { t: 'Salva forma', hot: true },
];

const DropMenu = ({ entries, x, y, w, row, rule }: { entries: Entry[]; x: number; y: number; w: number; row: number; rule: number }) => (
  <Menu $x={x} $y={y} $w={w}>
    {entries.map((e, i) => e === null ? <MenuRule key={i} $h={rule} /> : (
      <MenuEntry key={i} $h={row}>
        <MenuRow type="button" $hot={e.hot} disabled={e.off}>
          <span>{e.check && <CheckIcon />}</span>
          <span>{e.t}</span>
          <Shortcut $plain={e.hot || e.off}>{e.s}</Shortcut>
          <MenuArrow>{e.sub && <PointerIcon />}</MenuArrow>
        </MenuRow>
      </MenuEntry>
    ))}
  </Menu>
);

/* ---------- document windows ---------- */

const DocWindow = ({ title, x, y, w, h, children }: { title: string; x: number; y: number; w: number; h: number; children: React.ReactNode }) => (
  <InnerWindow $x={x} $y={y} $w={w} $h={h}>
    <TitleBar $h={32} $top={4}>
      <DocIcon />
      <TitleText>{title}</TitleText>
      <WindowButtons>
        <WindowControl kind="min" label="Riduci a icona" />
        <WindowControl kind="max" label="Ingrandisci" />
        <WindowControl kind="close" label="Chiudi" />
      </WindowButtons>
    </TitleBar>
    <Mat><Canvas aria-label={title}>{children}</Canvas></Mat>
  </InnerWindow>
);

/* ---------- "Nuovo" dialog ---------- */

const NumberField = ({ id, label, value }: { id: string; label: string; value: string }) => (
  <div>
    <Label htmlFor={id}>{label}</Label>
    <Spinner>
      <input id={id} defaultValue={value} />
      <SpinButtons>
        <SpinButton type="button" aria-label="Aumenta"><TriangleIcon d="M1 5h6L4 1z" /></SpinButton>
        <SpinButton type="button" aria-label="Diminuisci"><TriangleIcon d="M1 0h6L4 4z" /></SpinButton>
      </SpinButtons>
    </Spinner>
  </div>
);

const ReadOnlyField = ({ id, label, value }: { id: string; label: string; value: string }) => (
  <div>
    <Label htmlFor={id}>{label}</Label>
    <TextField id={id} $w={68} readOnly defaultValue={value} />
  </div>
);

const NewDialog = () => (
  <InnerWindow $x={327} $y={129} $w={297} $h={478} role="dialog" aria-label="Nuovo">
    <TitleBar $h={29} $gap={3} $top={2}>
      <TitleText>Nuovo</TitleText>
      <WindowControl kind="close" label="Chiudi" />
    </TitleBar>
    <DialogBody onSubmit={e => e.preventDefault()}>
      <Group>
        <legend>Dimensione in pixel / Memoria</legend>
        <Line $gap={14}>
          <ReadOnlyField id="cur-w" label="Larghezza :" value="300" />
          <ReadOnlyField id="cur-h" label="Altezza :" value="250" />
          <ReadOnlyField id="cur-m" label="Memoria :" value="219,73 Kb" />
        </Line>
      </Group>
      <Group $last>
        <legend>Nuova dimensione</legend>
        <Line $gap={6} $align="center">
          <Stack $gap={10}>
            <NumberField id="new-w" label="Larghezza :" value="300" />
            <NumberField id="new-h" label="Altezza :" value="250" />
          </Stack>
          <Line $gap={5} $top={17} $align="center">
            <svg width="13" height="54" viewBox="0 0 13 54" aria-hidden="true">
              <path d="M0 1.500h8.500v51H0M9 27h4" fill="none" stroke="#000" strokeWidth="3" />
            </svg>
            <SelectBox $w={88} $h={21}>
              <select aria-label="Unità"><option>pixel</option></select>
              <Caret><ChevronIcon /></Caret>
            </SelectBox>
          </Line>
        </Line>
        <Line $gap={6} $top={10}>
          <NumberField id="new-r" label="Risoluzione :" value="72,00" />
          <SelectBox $w={106} $h={21}>
            <select aria-label="Unità di risoluzione"><option>pixel/inch</option></select>
            <Caret><ChevronIcon /></Caret>
          </SelectBox>
        </Line>
        <Line $gap={14} $top={24}>
          <div>
            <Label htmlFor="bg">Sfondo :</Label>
            <ColorBox id="bg" type="button"><Caret><TriangleIcon /></Caret></ColorBox>
          </div>
          <div>
            <CheckLabel><input type="checkbox" />Trama di sfondo :</CheckLabel>
            <Line $gap={4} $align="center">
              <TextField $w={127} readOnly aria-label="Trama di sfondo" />
              <Icon name="open" off size={16} />
            </Line>
          </div>
        </Line>
        <Line $gap={0} $top={14}>
          <div>
            <Label htmlFor="preset">Fissa dimensioni :</Label>
            <SelectBox $w={209} $h={21}>
              <select id="preset"><option>&lt;personalizzato&gt;</option></select>
              <Caret><TriangleIcon /></Caret>
            </SelectBox>
          </div>
        </Line>
      </Group>
      <DialogButtons>
        <PushButton $default type="submit">Ok</PushButton>
        <PushButton type="button">Annulla</PushButton>
      </DialogButtons>
    </DialogBody>
  </InnerWindow>
);

/* ---------- arrows ---------- */

const RedArrow = ({ x1, y1, x2, y2 }: { x1: number; y1: number; x2: number; y2: number }) => {
  const a = Math.atan2(y2 - y1, x2 - x1);
  const pt = (d: number) => `${x2 - 11 * Math.cos(a + d)},${y2 - 11 * Math.sin(a + d)}`;
  return (
    <g fill="#f00" stroke="#f00">
      <line x1={x1} y1={y1} x2={x2 - 6 * Math.cos(a)} y2={y2 - 6 * Math.sin(a)} strokeWidth="2" />
      <polygon points={`${x2},${y2} ${pt(0.36)} ${pt(-0.36)}`} strokeWidth="0" />
    </g>
  );
};

/* ---------- page ---------- */

const one: Metrics = { title: 30, titleGap: 5, menu: 24, menuPad: 5, bar: 32, button: 25, leftWidth: 31, leftPitch: 29, rightWidth: 66, contentWidth: 56, swatch: 58, palette: 40, gap: 6, tool: 30 };
const two: Metrics = { title: 25, titleGap: 3, menu: 21, menuPad: 4, bar: 28, button: 24, leftWidth: 28, leftPitch: 25, rightWidth: 68, contentWidth: 54, swatch: 51, palette: 35, gap: 4, tool: 26 };
const three: Metrics = { title: 29, titleGap: 3, menu: 24, menuPad: 5, bar: 31, button: 25, leftWidth: 29, leftPitch: 28, rightWidth: 68, contentWidth: 56, swatch: 56, palette: 38, gap: 6, tool: 29 };
const four: Metrics = { title: 29, titleGap: 3, menu: 24, menuPad: 4, bar: 31, button: 24, leftWidth: 28, leftPitch: 28, rightWidth: 64, contentWidth: 54, swatch: 56, palette: 39, gap: 6, tool: 29 };

export default function App() {
  return (
    <Page>
      <Global />
      <PhotoFiltre id="a" m={one} inset="2px 2px 4px 0" active="File" extraPlugins={[]}>
        <DropMenu entries={fileMenu} x={3} y={53} w={204} row={22} rule={9} />
        <Overlay><StepNumber x="40" y="609" $size={132}>1</StepNumber></Overlay>
      </PhotoFiltre>

      <PhotoFiltre id="b" m={two} inset="0 3px 0 0" inactive extraPlugins={['columns', 'peaks', 'html']}>
        <NewDialog />
        <Overlay><StepNumber x="34" y="605" $size={113}>2</StepNumber></Overlay>
      </PhotoFiltre>

      <PhotoFiltre id="c" m={three} inset="3px 0 0 -1px" hasImage extraPlugins={['sunset']}>
        <DocWindow title="Senza titolo 1" x={34} y={120} w={316} h={340}>
          <rect x="32.500" y="43.500" width="216" height="155" fill="none" stroke="#111" strokeDasharray="4 3" />
        </DocWindow>
        <Overlay>
          <RedArrow x1={898} y1={270} x2={931} y2={270} />
          <RedArrow x1={909} y1={455} x2={933} y2={455} />
          <RedArrow x1={230} y1={381} x2={243} y2={364} />
          <RedNumber x="872" y="280" $size={40}>1</RedNumber>
          <RedNumber x="881" y="466" $size={32}>2</RedNumber>
          <RedNumber x="202" y="392" $size={33}>3</RedNumber>
          <StepNumber x="36" y="594" $size={113}>3</StepNumber>
        </Overlay>
      </PhotoFiltre>

      <PhotoFiltre id="d" m={four} inset="0 0 5px 1px" active="Selezione" hasImage back="#000" extraPlugins={['sunset']}>
        <DocWindow title="Senza titolo 2" x={352} y={139} w={306} h={341}>
          <rect x="30.500" y="41.500" width="211" height="159" fill="none" stroke="#4c4c3c" />
          <ellipse cx="136" cy="121" rx="105.500" ry="79.500" fill="none" stroke="#fff" strokeWidth="1.500" />
          <ellipse cx="136" cy="121" rx="105.500" ry="79.500" fill="none" stroke="#111" strokeDasharray="4 3" />
        </DocWindow>
        <DropMenu entries={selectionMenu} x={128} y={52} w={193} row={21} rule={10} />
        <Overlay>
          <RedArrow x1={91} y1={201} x2={132} y2={46} />
          <RedArrow x1={100} y1={451} x2={141} y2={450} />
          <RedArrow x1={853} y1={458} x2={932} y2={454} />
          <RedNumber x="63" y="224" $size={38}>2</RedNumber>
          <RedNumber x="74" y="461" $size={35}>3</RedNumber>
          <RedNumber x="828" y="462" $size={32}>1</RedNumber>
          <StepNumber x="41" y="590" $size={113}>4</StepNumber>
        </Overlay>
      </PhotoFiltre>
    </Page>
  );
}
